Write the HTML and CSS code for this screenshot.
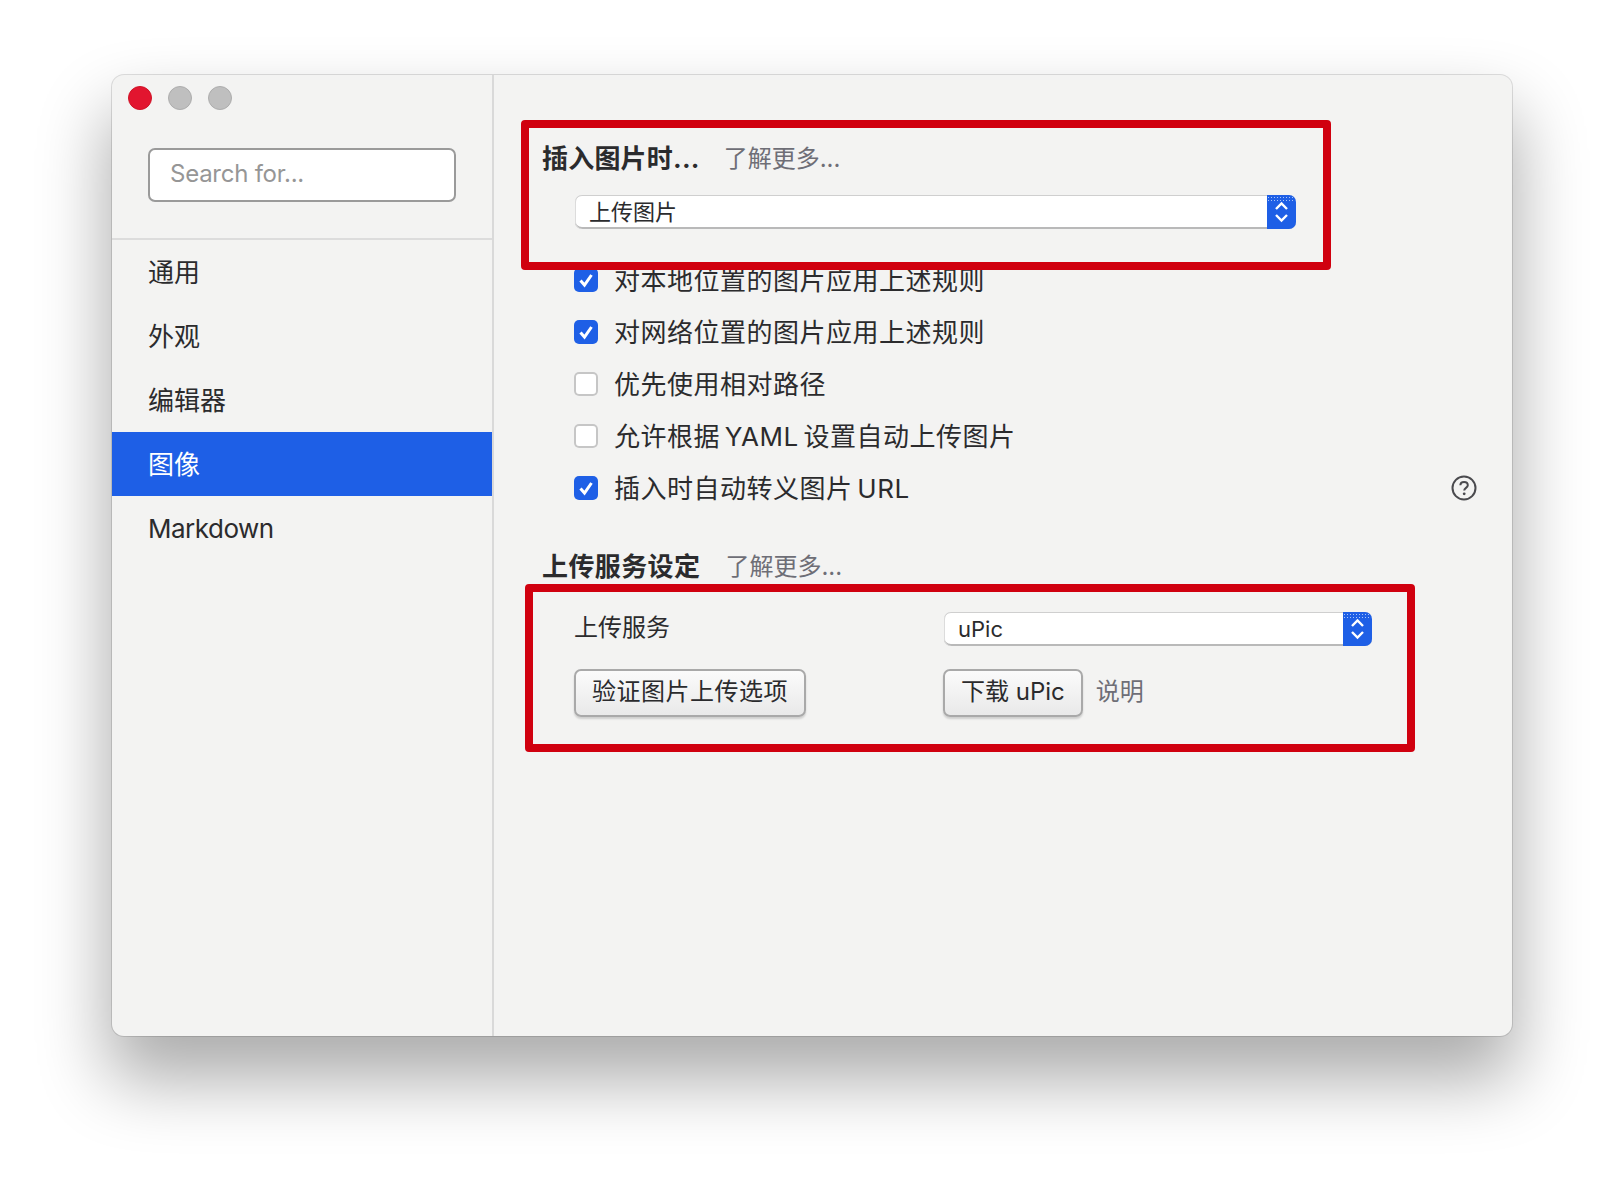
FILE: index.html
```html
<!DOCTYPE html>
<html lang="zh-CN">
<head>
    <meta charset="UTF-8">
    <title>偏好设置</title>
    <link rel="stylesheet" href="styles.css">
</head>
<body>
    <div class="window">
        <aside class="sidebar">
            <div class="sidebar-head">
                <div class="lights">
                    <span class="light red"></span>
                    <span class="light"></span>
                    <span class="light"></span>
                </div>
                <div class="search">Search for...</div>
            </div>
            <nav class="nav">
                <div class="nav-item">通用</div>
                <div class="nav-item">外观</div>
                <div class="nav-item">编辑器</div>
                <div class="nav-item active">图像</div>
                <div class="nav-item latin">Markdown</div>
            </nav>
        </aside>

        <main class="pane">
            <section class="red-box insert-box">
                <div class="heading">
                    <span class="heading-title">插入图片时...</span>
                    <span class="more">了解更多...</span>
                </div>
                <div class="select insert-select">
                    <span class="select-value">上传图片</span>
                    <span class="stepper">
                        <svg width="15" height="24" viewBox="0 0 15 24"><path d="M2 9 7.500 3.500 13 9M2 15 7.500 20.500 13 15" fill="none" stroke="#fff" stroke-width="2.400"/></svg>
                    </span>
                </div>
            </section>

            <div class="options">
                <div class="option">
                    <span class="check on"><svg width="24" height="24" viewBox="0 0 24 24"><path d="M6.500 12.500 10.500 17 17.500 7" fill="none" stroke="#fff" stroke-width="3"/></svg></span>
                    对本地位置的图片应用上述规则
                </div>
                <div class="option">
                    <span class="check on"><svg width="24" height="24" viewBox="0 0 24 24"><path d="M6.500 12.500 10.500 17 17.500 7" fill="none" stroke="#fff" stroke-width="3"/></svg></span>
                    对网络位置的图片应用上述规则
                </div>
                <div class="option">
                    <span class="check"></span>
                    优先使用相对路径
                </div>
                <div class="option">
                    <span class="check"></span>
                    允许根据 YAML 设置自动上传图片
                </div>
                <div class="option">
                    <span class="check on"><svg width="24" height="24" viewBox="0 0 24 24"><path d="M6.500 12.500 10.500 17 17.500 7" fill="none" stroke="#fff" stroke-width="3"/></svg></span>
                    插入时自动转义图片 URL
                    <span class="help"><svg width="26" height="26" viewBox="0 0 26 26"><circle cx="13" cy="13" r="11.500" fill="none" stroke="#4a4a4e" stroke-width="2"/><path d="M9.300 10.300C9.400 8 11 6.900 13 6.900 15.200 6.900 16.800 8.200 16.800 10.200 16.800 12.800 13.200 12.900 13.200 15.600" fill="none" stroke="#4a4a4e" stroke-width="2"/><circle cx="13.200" cy="18.800" r="1.400" fill="#4a4a4e"/></svg></span>
                </div>
            </div>

            <div class="heading upload-heading">
                <span class="heading-title">上传服务设定</span>
                <span class="more">了解更多...</span>
            </div>
            <section class="red-box upload-box">
                <div class="upload-label">上传服务</div>
                <div class="select">
                    <span class="select-value">uPic</span>
                    <span class="stepper">
                        <svg width="15" height="24" viewBox="0 0 15 24"><path d="M2 9 7.500 3.500 13 9M2 15 7.500 20.500 13 15" fill="none" stroke="#fff" stroke-width="2.400"/></svg>
                    </span>
                </div>
                <button class="btn verify-btn">验证图片上传选项</button>
                <div class="download">
                    <button class="btn">下载 uPic</button>
                    <span class="more note">说明</span>
                </div>
            </section>
        </main>
    </div>
</body>
</html>
```

FILE: styles.css
```css
* {
    box-sizing: border-box;
}
body {
    margin: 0;
    height: 1184px;
    overflow: hidden;
    background: #fff;
    color: #2b2b2d;
    font-family: "Inter", "Noto Sans CJK SC", sans-serif;
    font-size: 26px;
}
.window {
    display: flex;
    width: 1400px;
    height: 961px;
    margin: 75px 0 0 112px;
    background: #f3f3f2;
    border-radius: 12px;
    box-shadow: 0 0 0 1px rgba(0, 0, 0, 0.12), 0 40px 70px 4px rgba(0, 0, 0, 0.33);
}

/* sidebar */
.sidebar {
    flex: 0 0 382px;
    border-right: 2px solid #d9d9d9;
}
.sidebar-head {
    height: 165px;
    border-bottom: 2px solid #dcdcdc;
    padding: 11px 36px 0;
}
.lights {
    display: flex;
    gap: 16px;
    margin-left: -20px;
}
.light {
    width: 24px;
    height: 24px;
    border-radius: 50%;
    background: #bfbfbf;
    border: 1px solid #adadad;
}
.light.red {
    background: #e2152f;
    border-color: #d01226;
}
.search {
    width: 308px;
    height: 54px;
    margin-top: 38px;
    padding-left: 20px;
    background: #fff;
    border: 2px solid #9a9a9a;
    border-radius: 7px;
    color: #969696;
    font-size: 24px;
    letter-spacing: -0.25px;
    line-height: 48px;
}
.nav-item {
    height: 64px;
    padding-left: 36px;
    line-height: 66px;
}
.nav-item.active {
    background: #1e5fe6;
    color: #fff;
}
.nav-item.latin {
    letter-spacing: -0.5px;
}

/* right pane */
.pane {
    flex: 1;
    padding-top: 45px;
}
.red-box {
    border: 8px solid #d0000f;
    border-radius: 4px;
}
.insert-box {
    position: relative;
    z-index: 1;
    width: 810px;
    height: 150px;
    margin-left: 27px;
    padding: 11px 0 0 13px;
    background: #f3f3f2;
}
.heading {
    display: flex;
    align-items: center;
    gap: 24px;
    height: 34px;
}
.heading-title {
    font-weight: 700;
    letter-spacing: 0.2px;
}
.more {
    color: #6e6e76;
    font-size: 24px;
}
.select {
    display: flex;
    height: 34px;
    background: #fff;
    border-radius: 7px;
    box-shadow: inset 0 1px 0 #cfcfcf, inset 1px 0 0 #dcdcdc, inset 0 -2px 0 #b9b9b9;
}
.insert-select {
    width: 721px;
    margin: 22px 0 0 33px;
}
.select-value {
    flex: 1;
    padding-left: 14px;
    font-size: 22px;
    line-height: 35px;
}
.stepper {
    position: relative;
    display: flex;
    align-items: center;
    justify-content: center;
    width: 29px;
    background: #1e5fe6;
    border-radius: 0 7px 7px 0;
}
.stepper::before {
    content: "";
    position: absolute;
    top: 1px;
    left: 0;
    right: 2px;
    height: 6px;
    background-image: radial-gradient(#a9c3f7 0.8px, transparent 1px);
    background-size: 3px 3px;
}
.stepper svg {
    position: relative;
}

/* checkbox list */
.options {
    margin: -18px 35px 0 80px;
    letter-spacing: 0.5px;
    word-spacing: -3px;
}
.option {
    display: flex;
    align-items: center;
    gap: 16px;
    height: 52px;
}
.check {
    flex: 0 0 24px;
    width: 24px;
    height: 24px;
    margin-top: 4px;
    background: #fff;
    border-radius: 5px;
    box-shadow: inset 0 0 0 2px #c6c6c6;
}
.check.on {
    background: #1e5fe6;
    box-shadow: none;
}
.check svg {
    display: block;
}
.help {
    display: flex;
    margin: 4px 0 0 auto;
}

/* upload service */
.upload-heading {
    gap: 25px;
    margin: 35px 0 3px 48px;
}
.upload-heading .heading-title {
    letter-spacing: 0.4px;
}
.upload-box {
    display: grid;
    grid-template-columns: 369px 428px;
    grid-template-rows: 34px 48px;
    row-gap: 23px;
    align-items: center;
    width: 890px;
    height: 168px;
    margin-left: 31px;
    padding: 20px 0 0 42px;
}
.upload-label {
    margin-left: -1px;
    padding-bottom: 8px;
    font-size: 24px;
}
.btn {
    height: 48px;
    padding: 0 16px 7px;
    background: linear-gradient(#fbfbfb, #e9e9e9);
    border: 2px solid #a9a9a9;
    border-radius: 7px;
    box-shadow: 0 2px 2px rgba(0, 0, 0, 0.15);
    color: inherit;
    font-family: inherit;
    font-size: 24px;
}
.verify-btn {
    justify-self: start;
    width: 232px;
    margin-left: -1px;
    padding: 0 0 7px;
    letter-spacing: 0.5px;
}
.download {
    display: flex;
    align-items: center;
    gap: 13px;
    margin-left: -1px;
}
.note {
    padding-bottom: 8px;
}
```
